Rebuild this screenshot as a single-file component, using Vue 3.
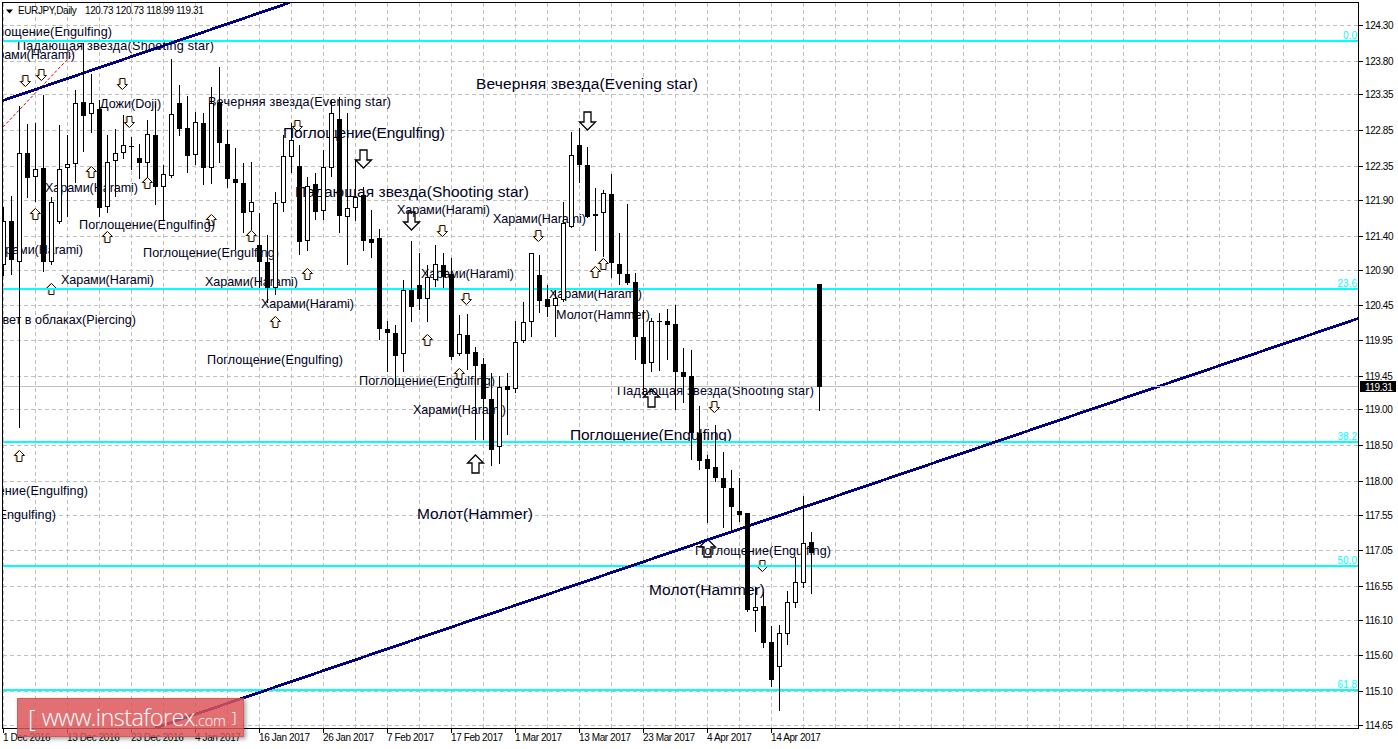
<template>
  <div class="chart-window">
    <svg class="chart" width="1398" height="749" viewBox="0 0 1398 749">
      <defs>
        <clipPath id="plot-area">
          <rect x="3" y="3" width="1355" height="725" />
        </clipPath>
      </defs>

      <g clip-path="url(#plot-area)">
        <!-- grid -->
        <g class="grid" shape-rendering="crispEdges">
          <line v-for="x in gridX" :key="'gx' + x" :x1="x + 0.5" :x2="x + 0.5" y1="3" y2="728" />
          <line v-for="p in prices" :key="'gy' + p.y" x1="3" x2="1358" :y1="p.y + 0.5" :y2="p.y + 0.5" />
        </g>

        <line class="red-trend" x1="3" y1="127" x2="83" y2="43" />

        <!-- pattern arrows, text is drawn over them -->
        <path
          v-for="(a, i) in arrows"
          :key="'a' + i"
          :class="a.big ? 'arrow-big' : 'arrow'"
          :d="arrowPath(a)"
        />

        <!-- candle pattern labels -->
        <text
          v-for="(l, i) in labels"
          :key="'l' + i"
          class="pattern"
          :class="{ big: l.big }"
          :x="l.x"
          :y="l.y"
          :text-anchor="l.end ? 'end' : 'start'"
          :textLength="labelWidth(l)"
          lengthAdjust="spacing"
        >{{ l.text }}</text>

        <!-- fibo levels -->
        <g v-for="f in fibo" :key="f.label">
          <rect class="fibo-line" x="3" :y="f.y" width="1355" height="2" shape-rendering="crispEdges" />
          <text class="fibo-label" x="1357" :y="f.y - 1" text-anchor="end">{{ f.label }}</text>
        </g>

        <line class="trend" x1="3" y1="100.5" x2="290" y2="2.5" />
        <line class="trend" x1="155" y1="728" x2="1358" y2="318.5" />

        <line class="last-price" x1="3" x2="1358" y1="386.5" y2="386.5" shape-rendering="crispEdges" />

        <!-- candles -->
        <g v-for="c in candles" :key="c.x" shape-rendering="crispEdges">
          <line class="wick" :x1="c.x + 0.5" :x2="c.x + 0.5" :y1="c.hi" :y2="c.lo" />
          <rect v-if="c.black" class="body-black" :x="c.x - 2" :y="c.top" width="5" :height="c.bot - c.top" />
          <rect v-else class="body-white" :x="c.x - 1.5" :y="c.top + 0.5" width="4" :height="c.bot - c.top - 1" />
        </g>
      </g>

      <!-- frame and axes -->
      <g class="frame" shape-rendering="crispEdges">
        <line x1="2.5" x2="2.5" y1="2" y2="729" />
        <line x1="2" x2="1359" y1="2.5" y2="2.5" />
        <line x1="1358.5" x2="1358.5" y1="2" y2="729" />
        <line x1="2" x2="1359" y1="728.5" y2="728.5" />
        <line v-for="p in prices" :key="'tp' + p.y" x1="1359" x2="1363" :y1="p.y + 0.5" :y2="p.y + 0.5" />
        <line v-for="d in dates" :key="'td' + d.x" :x1="d.x + 0.5" :x2="d.x + 0.5" y1="729" y2="733" />
      </g>

      <text v-for="p in prices" :key="'pt' + p.y" class="axis-text" x="1365" :y="p.y + 4">{{ p.label }}</text>
      <text v-for="d in dates" :key="'dt' + d.x" class="axis-text" :x="d.x" y="741">{{ d.label }}</text>

      <rect class="price-tag" x="1360" y="381" width="36" height="11" shape-rendering="crispEdges" />
      <text class="axis-text price-tag-text" x="1365" y="390.5">119.31</text>

      <!-- symbol legend -->
      <path d="M6 9.5h7l-3.5 4z" fill="#000" />
      <text class="axis-text" x="18" y="14">EURJPY,Daily</text>
      <text class="axis-text" x="85" y="14">120.73 120.73 118.99 119.31</text>
    </svg>

    <div class="watermark">
      <span class="bracket">[</span>
      <span class="site">www.instaforex<small>.com</small></span>
      <span class="bracket end">]</span>
    </div>
  </div>
</template>

<script setup>
const prices = [
  ['124.30', 25], ['123.80', 61], ['123.35', 94], ['122.85', 130], ['122.35', 166],
  ['121.90', 200], ['121.40', 236], ['120.90', 270], ['120.45', 305], ['119.95', 340],
  ['119.45', 376], ['119.00', 409], ['118.50', 445], ['118.00', 481], ['117.55', 515],
  ['117.05', 550], ['116.55', 586], ['116.10', 620], ['115.60', 655], ['115.10', 691],
  ['114.65', 725],
].map(([label, y]) => ({ label, y }))

const dates = [
  '1 Dec 2016', '13 Dec 2016', '23 Dec 2016', '4 Jan 2017', '16 Jan 2017', '26 Jan 2017', '7 Feb 2017',
  '17 Feb 2017', '1 Mar 2017', '13 Mar 2017', '23 Mar 2017', '4 Apr 2017', '14 Apr 2017',
].map((label, i) => ({ label, x: 3 + i * 64 }))

const gridX = Array.from({ length: 42 }, (_, i) => 3 + i * 32)

const fibo = [
  { label: '0.0', y: 40 },
  { label: '23.6', y: 288 },
  { label: '38.2', y: 441 },
  { label: '50.0', y: 565 },
  { label: '61.8', y: 689 },
]

// high, body top, body bottom, low, black body - pixels, one candle every 8px
const raw = [
  [207, 221, 265, 276, 0], [196, 221, 260, 275, 1], [106, 153, 262, 428, 0], [124, 153, 178, 198, 1],
  [123, 169, 177, 202, 0], [95, 168, 262, 272, 1], [197, 202, 262, 265, 0], [125, 169, 222, 224, 0],
  [135, 164, 168, 217, 0], [90, 103, 164, 183, 0], [43, 102, 116, 152, 1], [74, 103, 114, 133, 0],
  [100, 109, 208, 217, 1], [135, 162, 207, 213, 0], [129, 153, 161, 197, 0], [115, 145, 153, 159, 0],
  [137, 146, 147, 170, 1], [144, 158, 163, 179, 1], [120, 134, 163, 178, 0], [103, 135, 187, 205, 1],
  [165, 174, 187, 220, 0], [59, 114, 176, 178, 0], [85, 103, 129, 136, 1], [96, 128, 156, 173, 1],
  [112, 122, 155, 165, 0], [113, 123, 168, 185, 1], [87, 103, 168, 184, 0], [67, 103, 143, 163, 1],
  [130, 144, 179, 188, 1], [148, 179, 183, 250, 1], [163, 183, 213, 233, 1], [162, 202, 212, 230, 0],
  [213, 245, 262, 288, 1], [235, 262, 288, 303, 1], [192, 203, 288, 295, 0], [135, 156, 203, 212, 0],
  [123, 140, 157, 173, 0], [145, 166, 242, 255, 1], [177, 186, 241, 251, 0], [173, 184, 212, 220, 1],
  [150, 167, 211, 220, 0], [100, 113, 168, 177, 0], [97, 119, 216, 233, 1], [113, 208, 217, 265, 0],
  [160, 197, 208, 221, 0], [187, 195, 241, 251, 1], [210, 239, 243, 258, 1], [229, 238, 329, 340, 1],
  [321, 329, 333, 372, 1], [325, 333, 356, 387, 1], [280, 290, 354, 372, 0], [241, 290, 307, 322, 1],
  [253, 285, 299, 310, 1], [265, 277, 299, 322, 0], [245, 264, 280, 287, 0], [253, 265, 277, 288, 1],
  [258, 274, 357, 360, 1], [315, 334, 354, 356, 0], [314, 335, 354, 370, 1], [347, 352, 366, 440, 1],
  [358, 364, 399, 440, 1], [373, 399, 450, 466, 1], [376, 387, 447, 464, 0], [373, 386, 390, 435, 1],
  [321, 342, 389, 393, 0], [302, 322, 341, 343, 0], [253, 253, 322, 337, 0], [255, 275, 301, 313, 1],
  [285, 299, 307, 317, 1], [290, 298, 306, 337, 0], [202, 223, 300, 302, 0], [132, 155, 227, 228, 0],
  [128, 145, 165, 183, 1], [147, 165, 217, 218, 1], [188, 214, 216, 251, 1], [190, 193, 213, 257, 0],
  [174, 194, 263, 278, 1], [233, 264, 274, 285, 1], [204, 274, 283, 285, 1], [273, 282, 337, 360, 1],
  [310, 337, 364, 395, 1], [318, 321, 363, 372, 0], [313, 321, 322, 371, 1], [309, 321, 325, 360, 1],
  [305, 324, 372, 410, 1], [348, 372, 377, 403, 1], [350, 376, 433, 460, 1], [406, 433, 461, 470, 1],
  [455, 459, 469, 523, 1], [425, 467, 478, 482, 1], [452, 478, 488, 528, 1], [470, 488, 507, 532, 1],
  [478, 511, 515, 522, 1], [513, 513, 610, 612, 1], [587, 607, 611, 632, 0], [592, 606, 643, 648, 1],
  [626, 642, 680, 687, 1], [625, 633, 667, 711, 0], [591, 602, 634, 645, 0], [557, 582, 603, 608, 0],
  [496, 543, 583, 588, 0], [532, 542, 553, 594, 1], [284, 284, 387, 411, 1],
]

const candles = raw.map(([hi, top, bot, lo, black], i) => ({ x: 3 + i * 8, hi, top, bot, lo, black }))

const H = 'Харами(Harami)'
const E = 'Поглощение(Engulfing)'
const S = 'Падающая звезда(Shooting star)'
const N = 'Вечерняя звезда(Evening star)'
const M = 'Молот(Hammer)'

// widths as drawn by the terminal: [normal, big]
const widths = {
  [H]: [93, 112],
  [E]: [136, 162],
  [S]: [197, 234],
  [N]: [183, 222],
  [M]: [94, 116],
}

function labelWidth(l) {
  const w = widths[l.text]
  return w ? w[l.big ? 1 : 0] : undefined
}

const labels = [
  { text: E, x: 112, y: 32, end: true },
  { text: S, x: 17, y: 46 },
  { text: H, x: 75, y: 55, end: true },
  { text: 'Дожи(Doji)', x: 100, y: 104 },
  { text: N, x: 208, y: 102 },
  { text: E, x: 283, y: 132, big: true },
  { text: S, x: 295, y: 191, big: true },
  { text: N, x: 476, y: 83, big: true },
  { text: H, x: 45, y: 188 },
  { text: E, x: 79, y: 225 },
  { text: E, x: 143, y: 253 },
  { text: H, x: 83, y: 250, end: true },
  { text: H, x: 61, y: 280 },
  { text: H, x: 205, y: 282 },
  { text: H, x: 261, y: 304 },
  { text: 'Просвет в облаках(Piercing)', x: 136, y: 320, end: true },
  { text: E, x: 207, y: 360 },
  { text: E, x: 359, y: 381 },
  { text: H, x: 413, y: 410 },
  { text: H, x: 397, y: 210 },
  { text: H, x: 421, y: 274 },
  { text: H, x: 493, y: 219 },
  { text: H, x: 549, y: 294 },
  { text: M, x: 556, y: 315 },
  { text: S, x: 617, y: 391 },
  { text: E, x: 570, y: 434, big: true },
  { text: M, x: 417, y: 513, big: true },
  { text: M, x: 649, y: 589, big: true },
  { text: E, x: 695, y: 551 },
  { text: E, x: 88, y: 491, end: true },
  { text: E, x: 56, y: 515, end: true },
]

const arrows = [
  { x: 25, y: 81, down: true }, { x: 41, y: 75, down: true }, { x: 122, y: 84, down: true },
  { x: 129, y: 122, down: true }, { x: 297, y: 126, down: true }, { x: 442, y: 231, down: true },
  { x: 538, y: 236, down: true }, { x: 466, y: 299, down: true }, { x: 714, y: 407, down: true },
  { x: 762, y: 566, down: true },
  { x: 91, y: 172 }, { x: 147, y: 183 }, { x: 35, y: 214 }, { x: 107, y: 237 }, { x: 251, y: 236 },
  { x: 211, y: 220 }, { x: 51, y: 289 }, { x: 307, y: 274 }, { x: 275, y: 322 }, { x: 19, y: 456 },
  { x: 595, y: 272 }, { x: 603, y: 264 }, { x: 427, y: 340 }, { x: 459, y: 374 },
  { x: 587, y: 121, down: true, big: true }, { x: 363, y: 159, down: true, big: true },
  { x: 411, y: 221, down: true, big: true },
  { x: 475, y: 464, big: true }, { x: 651, y: 398, big: true }, { x: 707, y: 548, big: true },
]

function arrowPath(a) {
  const w = a.big ? 8 : 5
  const s = a.big ? 3.5 : 2.5
  const h = a.big ? 9 : 5.5
  const head = a.big ? 8 : 5
  const dir = a.down ? 1 : -1
  const x = a.x + 0.5
  const base = dir * (h - head)
  const pts = [
    [0, dir * h], [w, base], [s, base], [s, -dir * h], [-s, -dir * h], [-s, base], [-w, base],
  ]
  return 'M' + pts.map(([px, py]) => `${x + px} ${a.y + py}`).join('L') + 'Z'
}
</script>

<style>
html, body {
  margin: 0;
  background: #fff;
  overflow: hidden;
}
</style>

<style scoped>
.chart-window {
  position: relative;
  width: 1398px;
  height: 749px;
  background: #fff;
  overflow: hidden;
}

.chart {
  display: block;
}

.grid line {
  stroke: #c0c0c0;
  stroke-width: 1;
  stroke-dasharray: 4 3;
}

.red-trend {
  stroke: #e00000;
  stroke-width: 1;
  stroke-dasharray: 3 2;
}

.pattern {
  font-family: "Liberation Sans", Arial, sans-serif;
  font-size: 12.6px;
  fill: #000020;
  dominant-baseline: central;
}

.pattern.big {
  font-size: 15.5px;
}

.arrow, .arrow-big {
  fill: #fff;
  stroke: #1c1410;
  stroke-width: 1;
  stroke-linejoin: miter;
  filter: drop-shadow(-0.7px 0 0 rgba(240, 140, 30, 0.7));
}

.arrow-big {
  stroke: #000;
  stroke-width: 1.3;
  filter: none;
}

.fibo-line {
  fill: #00ffff;
}

.fibo-label {
  font-family: "Liberation Sans", Arial, sans-serif;
  font-size: 10px;
  fill: #00ffff;
}

.trend {
  stroke: #000080;
  stroke-width: 2.8;
  shape-rendering: crispEdges;
}

.last-price {
  stroke: #c0c0c0;
  stroke-width: 1;
}

.wick {
  stroke: #000;
  stroke-width: 1;
}

.body-black {
  fill: #000;
}

.body-white {
  fill: #fff;
  stroke: #000;
  stroke-width: 1;
}

.frame line {
  stroke: #000;
  stroke-width: 1;
}

.axis-text {
  font-family: "Liberation Sans", Arial, sans-serif;
  font-size: 10px;
  letter-spacing: -0.4px;
  fill: #000;
}

.price-tag {
  fill: #000;
}

.price-tag-text {
  fill: #fff;
}

.watermark {
  position: absolute;
  left: 17px;
  top: 698px;
  width: 227px;
  height: 39px;
  box-sizing: border-box;
  display: flex;
  align-items: center;
  padding: 0 10px 0 10px;
  gap: 6px;
  background: rgba(220, 85, 88, 0.84);
  border: 1px solid rgba(190, 70, 70, 0.5);
  box-shadow: 2px 2px 4px rgba(0, 0, 0, 0.35);
  color: #fff;
  font-family: "Open Sans", sans-serif;
  font-weight: 300;
  white-space: nowrap;
}

.bracket {
  font-size: 24px;
  line-height: 1;
}

.bracket.end {
  font-size: 15px;
  margin-left: auto;
}

.site {
  font-size: 23.5px;
  line-height: 1;
  letter-spacing: -0.6px;
}

.site small {
  font-size: 14.5px;
  letter-spacing: -0.2px;
}
</style>
